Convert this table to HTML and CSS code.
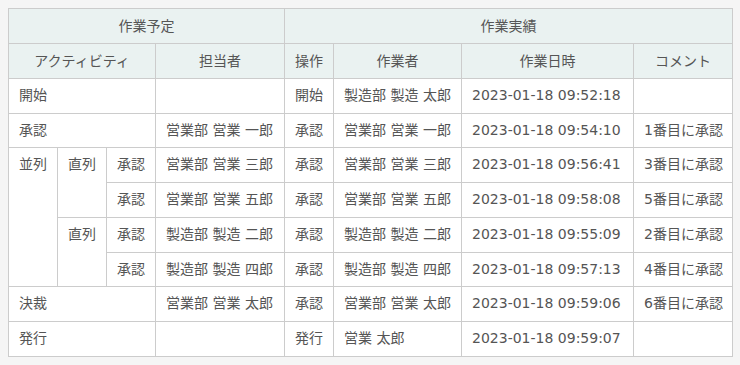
FILE: index.html
```html
<!DOCTYPE html>
<html lang="ja">
<head>
<meta charset="utf-8">
<link rel="stylesheet" href="styles.css">
</head>
<body>
<table class="flow">
  <colgroup>
    <col class="c-a"><col class="c-b"><col class="c-c"><col class="c-tanto">
    <col class="c-op"><col class="c-worker"><col class="c-date"><col class="c-comment">
  </colgroup>
  <thead>
    <tr>
      <th colspan="4">作業予定</th>
      <th colspan="4">作業実績</th>
    </tr>
    <tr>
      <th colspan="3">アクティビティ</th>
      <th>担当者</th>
      <th>操作</th>
      <th>作業者</th>
      <th>作業日時</th>
      <th>コメント</th>
    </tr>
  </thead>
  <tbody>
    <tr>
      <td colspan="3">開始</td>
      <td></td>
      <td>開始</td>
      <td>製造部 製造 太郎</td>
      <td>2023-01-18 09:52:18</td>
      <td></td>
    </tr>
    <tr>
      <td colspan="3">承認</td>
      <td>営業部 営業 一郎</td>
      <td>承認</td>
      <td>営業部 営業 一郎</td>
      <td>2023-01-18 09:54:10</td>
      <td>1番目に承認</td>
    </tr>
    <tr>
      <td rowspan="4" class="top">並列</td>
      <td rowspan="2" class="top">直列</td>
      <td>承認</td>
      <td>営業部 営業 三郎</td>
      <td>承認</td>
      <td>営業部 営業 三郎</td>
      <td>2023-01-18 09:56:41</td>
      <td>3番目に承認</td>
    </tr>
    <tr>
      <td>承認</td>
      <td>営業部 営業 五郎</td>
      <td>承認</td>
      <td>営業部 営業 五郎</td>
      <td>2023-01-18 09:58:08</td>
      <td>5番目に承認</td>
    </tr>
    <tr>
      <td rowspan="2" class="top">直列</td>
      <td>承認</td>
      <td>製造部 製造 二郎</td>
      <td>承認</td>
      <td>製造部 製造 二郎</td>
      <td>2023-01-18 09:55:09</td>
      <td>2番目に承認</td>
    </tr>
    <tr>
      <td>承認</td>
      <td>製造部 製造 四郎</td>
      <td>承認</td>
      <td>製造部 製造 四郎</td>
      <td>2023-01-18 09:57:13</td>
      <td>4番目に承認</td>
    </tr>
    <tr>
      <td colspan="3">決裁</td>
      <td>営業部 営業 太郎</td>
      <td>承認</td>
      <td>営業部 営業 太郎</td>
      <td>2023-01-18 09:59:06</td>
      <td>6番目に承認</td>
    </tr>
    <tr>
      <td colspan="3">発行</td>
      <td></td>
      <td>発行</td>
      <td>営業 太郎</td>
      <td>2023-01-18 09:59:07</td>
      <td></td>
    </tr>
  </tbody>
</table>
</body>
</html>
```
FILE: styles.css
```css
html, body {
  margin: 0;
  background: #f5f5f5;
}
body {
  padding: 8px;
  font-family: "DejaVu Sans", "Noto Sans CJK JP", sans-serif;
  font-size: 14px;
  color: #555;
}
.flow {
  border-collapse: collapse;
  table-layout: fixed;
  width: 724px;
  background: #fff;
}
.c-a { width: 49px; }
.c-b { width: 49px; }
.c-c { width: 49px; }
.c-tanto { width: 129px; }
.c-op { width: 49px; }
.c-worker { width: 128px; }
.c-date { width: 172px; }
.c-comment { width: 99px; }
.flow th,
.flow td {
  border: 1px solid #ccc;
  padding: 7px 10px;
  line-height: 19.7px;
  white-space: nowrap;
  overflow: hidden;
  font-weight: normal;
}
.flow th {
  background: #eaf2f1;
  text-align: center;
  line-height: 20px;
}
.flow td {
  text-align: left;
}
.flow td.top {
  vertical-align: top;
}
```
